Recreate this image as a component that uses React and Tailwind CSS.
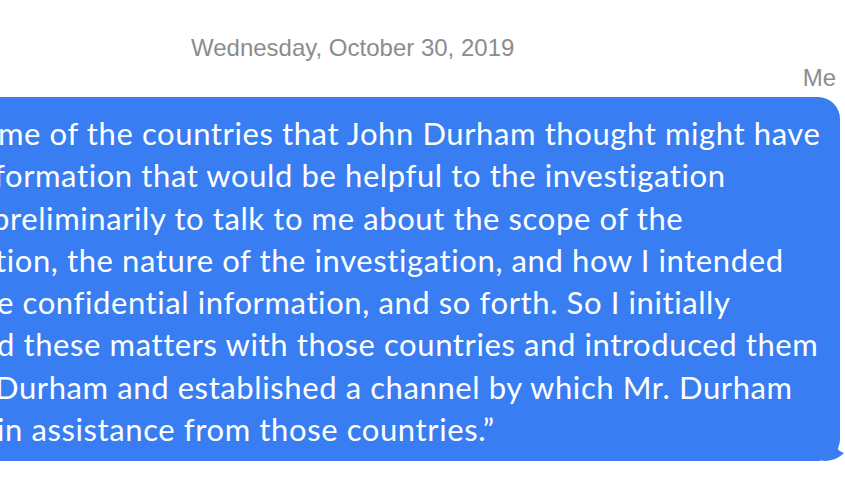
export default function App() {
  const lines = [
    { text: 'me of the countries that John Durham thought might have', cls: '' },
    { text: 'formation that would be helpful to the investigation', cls: '-ml-[4px]' },
    { text: 'preliminarily to talk to me about the scope of the', cls: '-ml-[6px]' },
    { text: 'tion, the nature of the investigation, and how I intended', cls: '-ml-[3px]' },
    { text: 'e confidential information, and so forth. So I initially', cls: '-ml-[1px]' },
    { text: 'd these matters with those countries and introduced them', cls: '-ml-[1px]' },
    { text: 'Durham and established a channel by which Mr. Durham', cls: '-ml-[3px]' },
    { text: 'in assistance from those countries.\u201d', cls: '-ml-[1px]' },
  ];

  return (
    <div className="w-[845px] h-[478px] overflow-hidden bg-white">
      <div className="pt-[34px] pl-[191px] text-[24px] leading-[28px] text-[#8c8c8c] font-['Liberation_Sans',Arial,sans-serif]">
        Wednesday, October 30, 2019
      </div>
      <div className="mt-[2px] pr-[9px] text-right text-[24px] leading-[28px] text-[#8c8c8c] font-['Liberation_Sans',Arial,sans-serif]">
        Me
      </div>
      <div className="flex justify-end pr-[5px] mt-[5px]">
        <div className="relative shrink-0 w-[900px] rounded-[22px] bg-[#387ef2] pt-[15px] pb-[11px] pl-[60px]">
          <div className="-ml-[2px] text-[31px] leading-[42.3px] tracking-[0.6px] text-white whitespace-nowrap font-['Lato','Noto_Sans',sans-serif]">
            {lines.map((l, i) => (
              <div key={i} className={l.cls}>
                {l.text}
              </div>
            ))}
          </div>
          <svg className="absolute -right-[5px] bottom-0" width="22" height="22" viewBox="0 0 22 22">
            <path d="M0 0 L0 22 C8 22 15 20 21 14 C15 12 11 7 11 0 Z" fill="#387ef2" />
          </svg>
        </div>
      </div>
    </div>
  );
}
